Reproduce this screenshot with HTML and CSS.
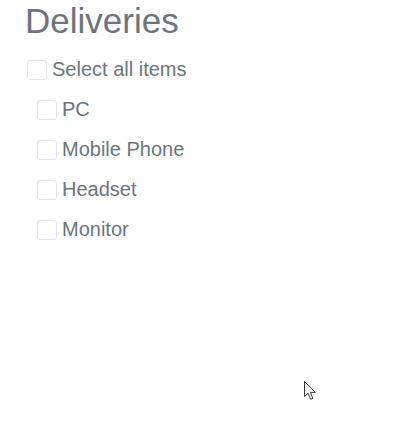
FILE: index.html
```html
<!DOCTYPE html>
<html lang="en">
<head>
<meta charset="utf-8">
<title>Deliveries</title>
<link rel="stylesheet" href="styles.css">
</head>
<body>
<div class="panel">
  <h3 class="title">Deliveries</h3>
  <label class="row row-all"><input type="checkbox" class="check"><span class="text">Select all items</span></label>
  <label class="row row-item"><input type="checkbox" class="check"><span class="text">PC</span></label>
  <label class="row row-item"><input type="checkbox" class="check"><span class="text">Mobile Phone</span></label>
  <label class="row row-item"><input type="checkbox" class="check"><span class="text">Headset</span></label>
  <label class="row row-item"><input type="checkbox" class="check"><span class="text">Monitor</span></label>
</div>
<svg class="cursor" width="13" height="20" viewBox="0 0 13 20" aria-hidden="true">
  <path d="M0.5 0.5 L0.5 15.5 L4 12.2 L6.6 18.3 L8.9 17.3 L6.4 11.4 L11.3 11.4 Z" fill="#fff" stroke="#3a3a3a" stroke-width="1" stroke-linejoin="miter"/>
</svg>
</body>
</html>
```
FILE: styles.css
```css
html, body {
  margin: 0;
  padding: 0;
  background: #fff;
}
body {
  font-family: "Liberation Sans", Arial, sans-serif;
  color: #6c757d;
  width: 405px;
  height: 431px;
  overflow: hidden;
  position: relative;
}
.panel {
  padding: 0 0 0 25px;
  display: flex;
  flex-direction: column;
}
.title {
  margin: 0 0 8px;
  font-size: 35px;
  font-weight: 400;
  line-height: 1.2;
  color: #6c757d;
}
.row {
  display: flex;
  align-items: center;
  height: 40px;
  gap: 5px;
  font-size: 20px;
  line-height: 1.5;
}
.row-all {
  padding-left: 2px;
}
.row-item {
  padding-left: 12px;
}
.check {
  appearance: none;
  -webkit-appearance: none;
  margin: 0;
  width: 20px;
  height: 20px;
  border: 1px solid #e2e4e7;
  border-radius: 3px;
  background: #fff;
  box-sizing: border-box;
  flex: none;
}
.text {
  padding-bottom: 2px;
}
.cursor {
  position: absolute;
  left: 304px;
  top: 381px;
}
```
